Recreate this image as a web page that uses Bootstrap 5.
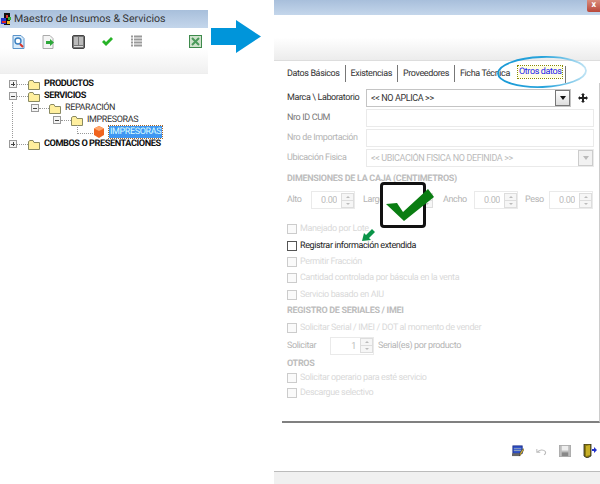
<!DOCTYPE html>
<html lang="es">
<head>
  <meta charset="UTF-8" />
  <meta name="viewport" content="width=device-width, initial-scale=1.0" />
  <title>Maestro de Insumos</title>
  <link href="https://cdn.jsdelivr.net/npm/bootstrap@5.3.2/dist/css/bootstrap.min.css" rel="stylesheet">
  <style>
    html, body { width: 600px; height: 484px; overflow: hidden; background: #fff; }
    body { position: relative; font-family: Roboto, "Liberation Sans", sans-serif; font-size: 9px; letter-spacing: -.38px; color: #222; line-height: 12px; white-space: nowrap; text-rendering: geometricPrecision; }

    /* the two windows and the marks drawn over them */
    .win-left { position: absolute; left: 0; top: 10px; width: 208px; }
    .win-right { position: absolute; left: 274px; top: 0; width: 326px; height: 484px; }
    .over { position: absolute; }
    .big-arrow { left: 211px; top: 20px; }
    .ring { left: 495px; top: 54px; }
    .check-box { left: 380px; top: 182px; width: 46px; height: 46px; border: 3px solid #111; border-radius: 4px; background: #fff; }
    .check-mark { left: 380px; top: 183px; }
    .mini-arrow { left: 361px; top: 228px; }

    .title-bar { height: 18px; background: linear-gradient(#a8bfdb, #c4d6eb); font-size: 10.6px; letter-spacing: 0; color: #333; gap: 2px; padding-left: 1px; }
    .tool-bar { height: 46px; background: linear-gradient(#fff 45%, #f0f0f0); padding-top: 7px; border-bottom: 1px solid #eee; }
    .tool-bar svg { display: block; flex: none; }

    /* tree */
    .tree-list { list-style: none; margin: 0; padding: 0; }
    .tree-wrap { padding: 4px 0 0 9px; }
    .tree-row { height: 12px; }
    .tree-kids { margin-left: 3px; border-left: 1px dotted #999; padding-left: 18px; }
    .tree-kids .tree-kids { border-left: 0; padding-left: 22px; margin-left: 0; }
    .tree-kids .tree-kids .tree-kids { padding-left: 24px; }
    .tree-box { width: 8px; height: 8px; border: 1px solid #999; background: #f4f4f4; flex: none; position: relative; }
    .tree-box::before { content: ""; position: absolute; left: 1px; right: 1px; top: 2.5px; height: 1px; background: #444; }
    .tree-plus::after { content: ""; position: absolute; top: 1px; bottom: 1px; left: 2.5px; width: 1px; background: #444; }
    .tree-dash { width: 11px; border-top: 1px dotted #999; flex: none; }
    .tree-kids .tree-dash { width: 10px; }
    .tree-elbow { width: 16px; height: 9px; margin-top: -6px; border-left: 1px dotted #999; border-bottom: 1px dotted #999; flex: none; }
    .folder-ico { flex: none; margin-right: 4px; }
    .tree-strong { font-weight: 700; color: #111; font-size: 9.2px; letter-spacing: -.45px; }
    .tree-plain { color: #333; }
    .tree-pick { background: #3f97f2; color: #dff; padding: 0 1px; height: 12px; outline: 1px dotted #a5682a; }

    /* right window */
    .title-right { height: 15px; background: linear-gradient(#a8bfdb, #c4d6eb); }
    .close-x { width: 13px; height: 12px; background: linear-gradient(#d98c7c, #b9483a); color: #fff; font-weight: 700; line-height: 11px; text-align: center; font-size: 9px; border-bottom-left-radius: 2px; }
    .tool-right { height: 46px; flex: none; background: linear-gradient(#fff 50%, #ececec); border-bottom: 1px solid #ddd; }

    .tab-strip { height: 19px; flex: none; margin: 3px 0 0 8px; padding: 0; border: 0; flex-wrap: nowrap; align-items: center; }
    .tab-strip .tab-item { color: #333; font-size: 9px; padding: 0 5px; border-right: 1px solid #777; height: 17px; line-height: 18px; background: none; }
    .tab-strip .tab-open { border-right: 0; }
    .tab-strip .tab-on { color: #2222ee; padding: 0 3px; line-height: 16px; }
    .tab-on span { display: block; outline: 1px dotted #8a8a00; background: #ffffe4; line-height: 12px; margin-top: 2px; padding: 0 1px; }

    .panel { height: 340px; flex: none; margin-left: 8px; padding: 5px 0 0 5px; border-bottom: 2px solid #808080; border-right: 1px solid #ccc; color: #b4b4b4; }
    .form-row { height: 20px; }
    .form-row > label { width: 79px; flex: none; margin: 0; }
    .form-row > .tall-label { color: #333; }
    .form-row > .half-label { color: #777; }
    .flat-input.form-control { height: 18px; min-height: 0; font-size: 9px; letter-spacing: -.38px; padding: 0 4px; border: 1px solid #eaeaea; border-radius: 0; background: #fff; color: #bbb; box-shadow: none; }
    .select-btn { width: 15px; height: 16px; margin-left: -16px; border: 1px solid #ccc; background: #f2f2f2; flex: none; }
    .select-btn::after { content: ""; border: 3px solid transparent; border-top: 4px solid #bbb; border-bottom: 0; }
    .sel-live.flat-input.form-control { border: 1px solid #c4c4c4; color: #333; }
    .select-live { border: 1px solid #777; background: linear-gradient(#fff, #ddd); }
    .select-live::after { border-top-color: #111; }
    .group-head { font-weight: 700; color: #bdbdbd; letter-spacing: -.3px; font-size: 9px; }
    .spin-group { width: 44px; flex: none; }
    .spin-group .flat-input { text-align: right; padding-right: 17px; }
    .spin-btns { width: 13px; height: 15px; margin-left: -14px; flex: none; border: 1px solid #ddd; }
    .spin-btns i { display: flex; flex: 1; background: #f6f6f6; align-items: center; justify-content: center; }
    .spin-btns i + i { border-top: 1px solid #ddd; }
    .spin-btns i::after { content: ""; border: 2px solid transparent; border-bottom: 2px solid #bbb; border-top: 0; }
    .spin-btns i + i::after { border-bottom: 0; border-top: 2px solid #bbb; }
    .dim-label { flex: none; }
    .form-check.check-row { height: 16.4px; min-height: 0; gap: 3px; margin: 0; padding: 0; }
    .form-check.check-tight { height: 15px; }
    .check-row .form-check-input { float: none; width: 10px; height: 10px; margin: 0; border: 1px solid #ccc; border-radius: 0; background-color: #fafafa; opacity: 1; flex: none; }
    .check-row .form-check-label { opacity: 1; color: #b4b4b4; }
    .check-live .form-check-input { border-color: #555; background-color: #fff; }
    .check-row.check-live .form-check-label { color: #222; }
    .foot-icons { height: 48px; flex: none; padding: 8px 3px 0 0; gap: 12px; }
    .status-strip { height: 13px; flex: none; background: #f0f0f0; border-top: 1px solid #bbb; }
  </style>
</head>
<body>

  <!-- left window: tree -->
  <section class="win-left">
    <div class="title-bar d-flex align-items-center">
      <svg width="11" height="12" viewBox="0 0 11 12"><rect x="3" y="0" width="6" height="12" fill="#111"/><rect x="0" y="5" width="5" height="6" fill="#2233cc"/><rect x="1" y="8" width="4" height="2" fill="#d22"/><rect x="5" y="2" width="2" height="3" fill="#d33"/><rect x="7" y="4" width="3" height="3" fill="#3a3"/><rect x="6" y="8" width="3" height="3" fill="#eb2"/></svg>
      <span>Maestro de Insumos &amp; Servicios</span>
    </div>
    <div class="tool-bar d-flex align-items-start">
      <svg style="margin-left:12px" width="13" height="14" viewBox="0 0 13 14"><path d="M1 .5h8l3 3v10H1z" fill="#d8ecfb" stroke="#5b93c9"/><circle cx="6" cy="6" r="3" fill="#fff" stroke="#3a7fc0" stroke-width="1.4"/><path d="M8 9l3 3" stroke="#d8352a" stroke-width="2"/></svg>
      <svg style="margin-left:17px" width="13" height="14" viewBox="0 0 13 14"><path d="M1 .5h7l3 3v10H1z" fill="#f4f4f4" stroke="#aaa"/><path d="M4 6h4V4l4 3.500-4 3.500V9H4z" fill="#2ea83a"/></svg>
      <svg style="margin-left:17px" width="13" height="14" viewBox="0 0 13 14"><rect x=".5" y=".5" width="12" height="13" rx="1.500" fill="#777" stroke="#444"/><path d="M3 2v8M5 2v8M8 2v8M10 2v8" stroke="#fff" stroke-width="1"/><rect x="2" y="11" width="9" height="1" fill="#ddd"/></svg>
      <svg style="margin-left:17px;margin-top:2px" width="11" height="10" viewBox="0 0 11 10"><path d="M0 5l2-2 2 2 5-5 2 2-7 7z" fill="#27b327"/></svg>
      <svg style="margin-left:18px" width="11" height="13" viewBox="0 0 11 13"><path d="M0 1.500h2M3 1.500h8M0 4.500h2M3 4.500h8M0 7.500h2M3 7.500h8M0 10.500h2M3 10.500h8" stroke="#9a9a9a" stroke-width="2"/></svg>
      <svg style="margin-left:47px" width="13" height="13" viewBox="0 0 13 13"><rect x=".5" y=".5" width="12" height="12" fill="#cfe2cc" stroke="#3e8a4c"/><path d="M3 3l7 7M10 3l-7 7" stroke="#4a9a5a" stroke-width="2"/></svg>
    </div>
    <div class="tree-wrap">
      <ul class="tree-list">
        <li>
          <div class="tree-row d-flex align-items-center">
            <span class="tree-box tree-plus"></span><span class="tree-dash"></span>
            <svg class="folder-ico" width="12" height="11" viewBox="0 0 12 11"><path d="M.5 2.500v8h11v-7H6l-1-2H2z" fill="#ffef9e" stroke="#8a8a62"/></svg>
            <span class="tree-strong">PRODUCTOS</span>
          </div>
        </li>
        <li>
          <div class="tree-row d-flex align-items-center">
            <span class="tree-box"></span><span class="tree-dash"></span>
            <svg class="folder-ico" width="12" height="11" viewBox="0 0 12 11"><path d="M.5 2.500v8h11v-7H6l-1-2H2z" fill="#ffef9e" stroke="#8a8a62"/></svg>
            <span class="tree-strong">SERVICIOS</span>
          </div>
          <ul class="tree-list tree-kids">
            <li>
              <div class="tree-row d-flex align-items-center">
                <span class="tree-box"></span><span class="tree-dash"></span>
                <svg class="folder-ico" width="12" height="11" viewBox="0 0 12 11"><path d="M.5 2.500v8h11v-7H6l-1-2H2z" fill="#ffef9e" stroke="#8a8a62"/></svg>
                <span class="tree-plain">REPARACIÓN</span>
              </div>
              <ul class="tree-list tree-kids">
                <li>
                  <div class="tree-row d-flex align-items-center">
                    <span class="tree-box"></span><span class="tree-dash"></span>
                    <svg class="folder-ico" width="12" height="11" viewBox="0 0 12 11"><path d="M.5 2.500v8h11v-7H6l-1-2H2z" fill="#ffef9e" stroke="#8a8a62"/></svg>
                    <span class="tree-plain">IMPRESORAS</span>
                  </div>
                  <ul class="tree-list tree-kids">
                    <li>
                      <div class="tree-row d-flex align-items-center">
                        <span class="tree-elbow"></span>
                        <svg class="folder-ico" width="12" height="12" viewBox="0 0 12 12"><path d="M6 0l5 2.500v6.500L6 12 1 9V2.500z" fill="#f0641e"/><path d="M1 2.500L6 5l5-2.500L6 0z" fill="#ffa56b"/></svg>
                        <span class="tree-pick">IMPRESORAS</span>
                      </div>
                    </li>
                  </ul>
                </li>
              </ul>
            </li>
          </ul>
        </li>
        <li>
          <div class="tree-row d-flex align-items-center">
            <span class="tree-box tree-plus"></span><span class="tree-dash"></span>
            <svg class="folder-ico" width="12" height="11" viewBox="0 0 12 11"><path d="M.5 2.500v8h11v-7H6l-1-2H2z" fill="#ffef9e" stroke="#8a8a62"/></svg>
            <span class="tree-strong">COMBOS O PRESENTACIONES</span>
          </div>
        </li>
      </ul>
    </div>
  </section>

  <!-- right window: form -->
  <section class="win-right d-flex flex-column">
    <div class="title-right d-flex justify-content-end align-items-start flex-shrink-0"><span class="close-x">x</span></div>
    <div class="tool-right"></div>
    <ul class="nav tab-strip">
      <li class="nav-item"><a class="nav-link tab-item" href="#">Datos Básicos</a></li>
      <li class="nav-item"><a class="nav-link tab-item" href="#">Existencias</a></li>
      <li class="nav-item"><a class="nav-link tab-item" href="#">Proveedores</a></li>
      <li class="nav-item"><a class="nav-link tab-item tab-open" href="#">Ficha Técnica</a></li>
      <li class="nav-item"><a class="nav-link tab-item tab-on active" href="#"><span>Otros datos</span></a></li>
    </ul>

    <div class="panel">
      <div class="form-row d-flex align-items-center">
        <label class="tall-label">Marca \ Laboratorio</label>
        <input class="form-control flat-input sel-live" style="width:205px;flex:none" value="&lt;&lt; NO APLICA &gt;&gt;">
        <span class="select-btn select-live d-flex align-items-center justify-content-center"></span>
        <svg class="ms-2" width="10" height="10" viewBox="0 0 10 10"><path d="M5 0l2 2H6v2h2V3l2 2-2 2V6H6v2h1l-2 2-2-2h1V6H2v1L0 5l2-2v1h2V2H3z" fill="#222"/></svg>
      </div>
      <div class="form-row d-flex align-items-center">
        <label class="half-label">Nro ID CUM</label>
        <input class="form-control flat-input" style="width:228px;flex:none">
      </div>
      <div class="form-row d-flex align-items-center">
        <label>Nro de Importación</label>
        <input class="form-control flat-input" style="width:228px;flex:none">
      </div>
      <div class="form-row d-flex align-items-center">
        <label>Ubicación Fisica</label>
        <input class="form-control flat-input" style="width:228px;flex:none" value="&lt;&lt; UBICACIÓN FISICA NO DEFINIDA &gt;&gt;">
        <span class="select-btn d-flex align-items-center justify-content-center"></span>
      </div>

      <div class="group-head d-flex align-items-center" style="height:22px">DIMENSIONES DE LA CAJA (CENTIMETROS)</div>
      <div class="d-flex align-items-center" style="height:20px">
        <span class="dim-label" style="width:24px">Alto</span>
        <div class="spin-group d-flex align-items-center"><input class="form-control flat-input" value="0.00"><span class="spin-btns d-flex flex-column"><i></i><i></i></span></div>
        <span class="dim-label" style="width:57px;margin-left:8px">Largo</span>
        <div class="spin-group d-flex align-items-center" style="width:23px"><span class="spin-btns d-flex flex-column" style="margin-left:0"><i></i><i></i></span></div>
        <span class="dim-label" style="width:31px">Ancho</span>
        <div class="spin-group d-flex align-items-center"><input class="form-control flat-input" value="0.00"><span class="spin-btns d-flex flex-column"><i></i><i></i></span></div>
        <span class="dim-label" style="width:24px;margin-left:7px">Peso</span>
        <div class="spin-group d-flex align-items-center"><input class="form-control flat-input" value="0.00"><span class="spin-btns d-flex flex-column"><i></i><i></i></span></div>
      </div>

      <div style="height:11px"></div>
      <div class="form-check check-row d-flex align-items-center"><input class="form-check-input" type="checkbox" disabled id="c1"><label class="form-check-label" for="c1">Manejado por Lote</label></div>
      <div class="form-check check-row check-live d-flex align-items-center"><input class="form-check-input" type="checkbox" id="c2"><label class="form-check-label" for="c2">Registrar información extendida</label></div>
      <div class="form-check check-row d-flex align-items-center"><input class="form-check-input" type="checkbox" disabled id="c3"><label class="form-check-label" for="c3">Permitir Fracción</label></div>
      <div class="form-check check-row d-flex align-items-center"><input class="form-check-input" type="checkbox" disabled id="c4"><label class="form-check-label" for="c4">Cantidad controlada por báscula en la venta</label></div>
      <div class="form-check check-row d-flex align-items-center"><input class="form-check-input" type="checkbox" disabled id="c5"><label class="form-check-label" for="c5">Servicio basado en AIU</label></div>

      <div class="group-head d-flex align-items-center" style="height:17px">REGISTRO DE SERIALES / IMEI</div>
      <div class="form-check check-row d-flex align-items-center"><input class="form-check-input" type="checkbox" disabled id="c6"><label class="form-check-label" for="c6">Solicitar Serial / IMEI / DOT al momento de vender</label></div>
      <div class="d-flex align-items-center" style="height:19px">
        <span class="dim-label" style="width:43px">Solicitar</span>
        <div class="spin-group d-flex align-items-center"><input class="form-control flat-input" value="1"><span class="spin-btns d-flex flex-column"><i></i><i></i></span></div>
        <span class="ms-1">Serial(es) por producto</span>
      </div>
      <div class="group-head" style="height:15px;padding-top:3px">OTROS</div>
      <div class="form-check check-row check-tight d-flex align-items-center"><input class="form-check-input" type="checkbox" disabled id="c7"><label class="form-check-label" for="c7">Solicitar operario para esté servicio</label></div>
      <div class="form-check check-row check-tight d-flex align-items-center"><input class="form-check-input" type="checkbox" disabled id="c8"><label class="form-check-label" for="c8">Descargue selectivo</label></div>
    </div>

    <div class="foot-icons d-flex align-items-center justify-content-end">
      <svg width="12" height="12" viewBox="0 0 13 13"><rect x="1" y="1" width="10" height="8" fill="#3355cc" stroke="#1d2f88"/><path d="M2 4h8M2 6h8" stroke="#9ab" /><rect x="0" y="9" width="9" height="3" fill="#666"/><path d="M8 12l1-4 3-4 1 1-3 5z" fill="#e8c030" stroke="#222" stroke-width=".5"/></svg>
      <svg width="11" height="9" viewBox="0 0 13 10"><path d="M1 2v4h4M1.500 6C4 2.500 9 2.500 11 5c.8 1.500 0 3-1.500 4" fill="none" stroke="#bbb" stroke-width="1.2"/></svg>
      <svg width="12" height="12" viewBox="0 0 13 13"><rect x=".5" y=".5" width="12" height="12" fill="#bdbdbd" stroke="#aaa"/><rect x="3" y="1" width="7" height="5" fill="#eee"/><rect x="3" y="8" width="7" height="4" fill="#888"/></svg>
      <svg width="14" height="14" viewBox="0 0 14 14"><path d="M1 0h7v12l-4 2-3-2z" fill="#8a7a10" stroke="#222" stroke-width=".8"/><path d="M3 2l4-1v10l-4 1z" fill="#c8b028"/><path d="M9 5h2V3l3 3-3 3V7H9z" fill="#2233cc"/></svg>
    </div>
    <div class="status-strip mt-auto"></div>
  </section>

  <!-- marks laid over the screenshots -->
  <svg class="over big-arrow" width="50" height="33" viewBox="0 0 50 33"><path d="M0 8h25V0l25 16.500L25 33v-8H0z" fill="#0095da"/></svg>
  <svg class="over ring" width="94" height="36" viewBox="0 0 94 36">
    <defs><linearGradient id="ringFade" x1="0" x2="1" y1="0" y2="0"><stop offset="0" stop-color="#1899d6"/><stop offset=".55" stop-color="#2aa5dc"/><stop offset="1" stop-color="#bfe3f4"/></linearGradient></defs>
    <ellipse cx="47" cy="18" rx="44" ry="15" transform="rotate(-2 47 18)" fill="none" stroke="url(#ringFade)" stroke-width="1.8"/>
  </svg>
  <div class="over check-box"></div>
  <svg class="over check-mark" width="56" height="42" viewBox="380 183 56 42"><path d="M386 204l11-1 6 9 25-23 6 8-30 24z" fill="#0a7d12"/></svg>
  <svg class="over mini-arrow" width="15" height="14" viewBox="361 228 15 14"><path d="M362 241l2-8 2 2 6-6 3 3-6 6 2 2z" fill="#0a9448"/></svg>

<script src="https://cdn.jsdelivr.net/npm/bootstrap@5.3.2/dist/js/bootstrap.bundle.min.js"></script>
</body>
</html>
